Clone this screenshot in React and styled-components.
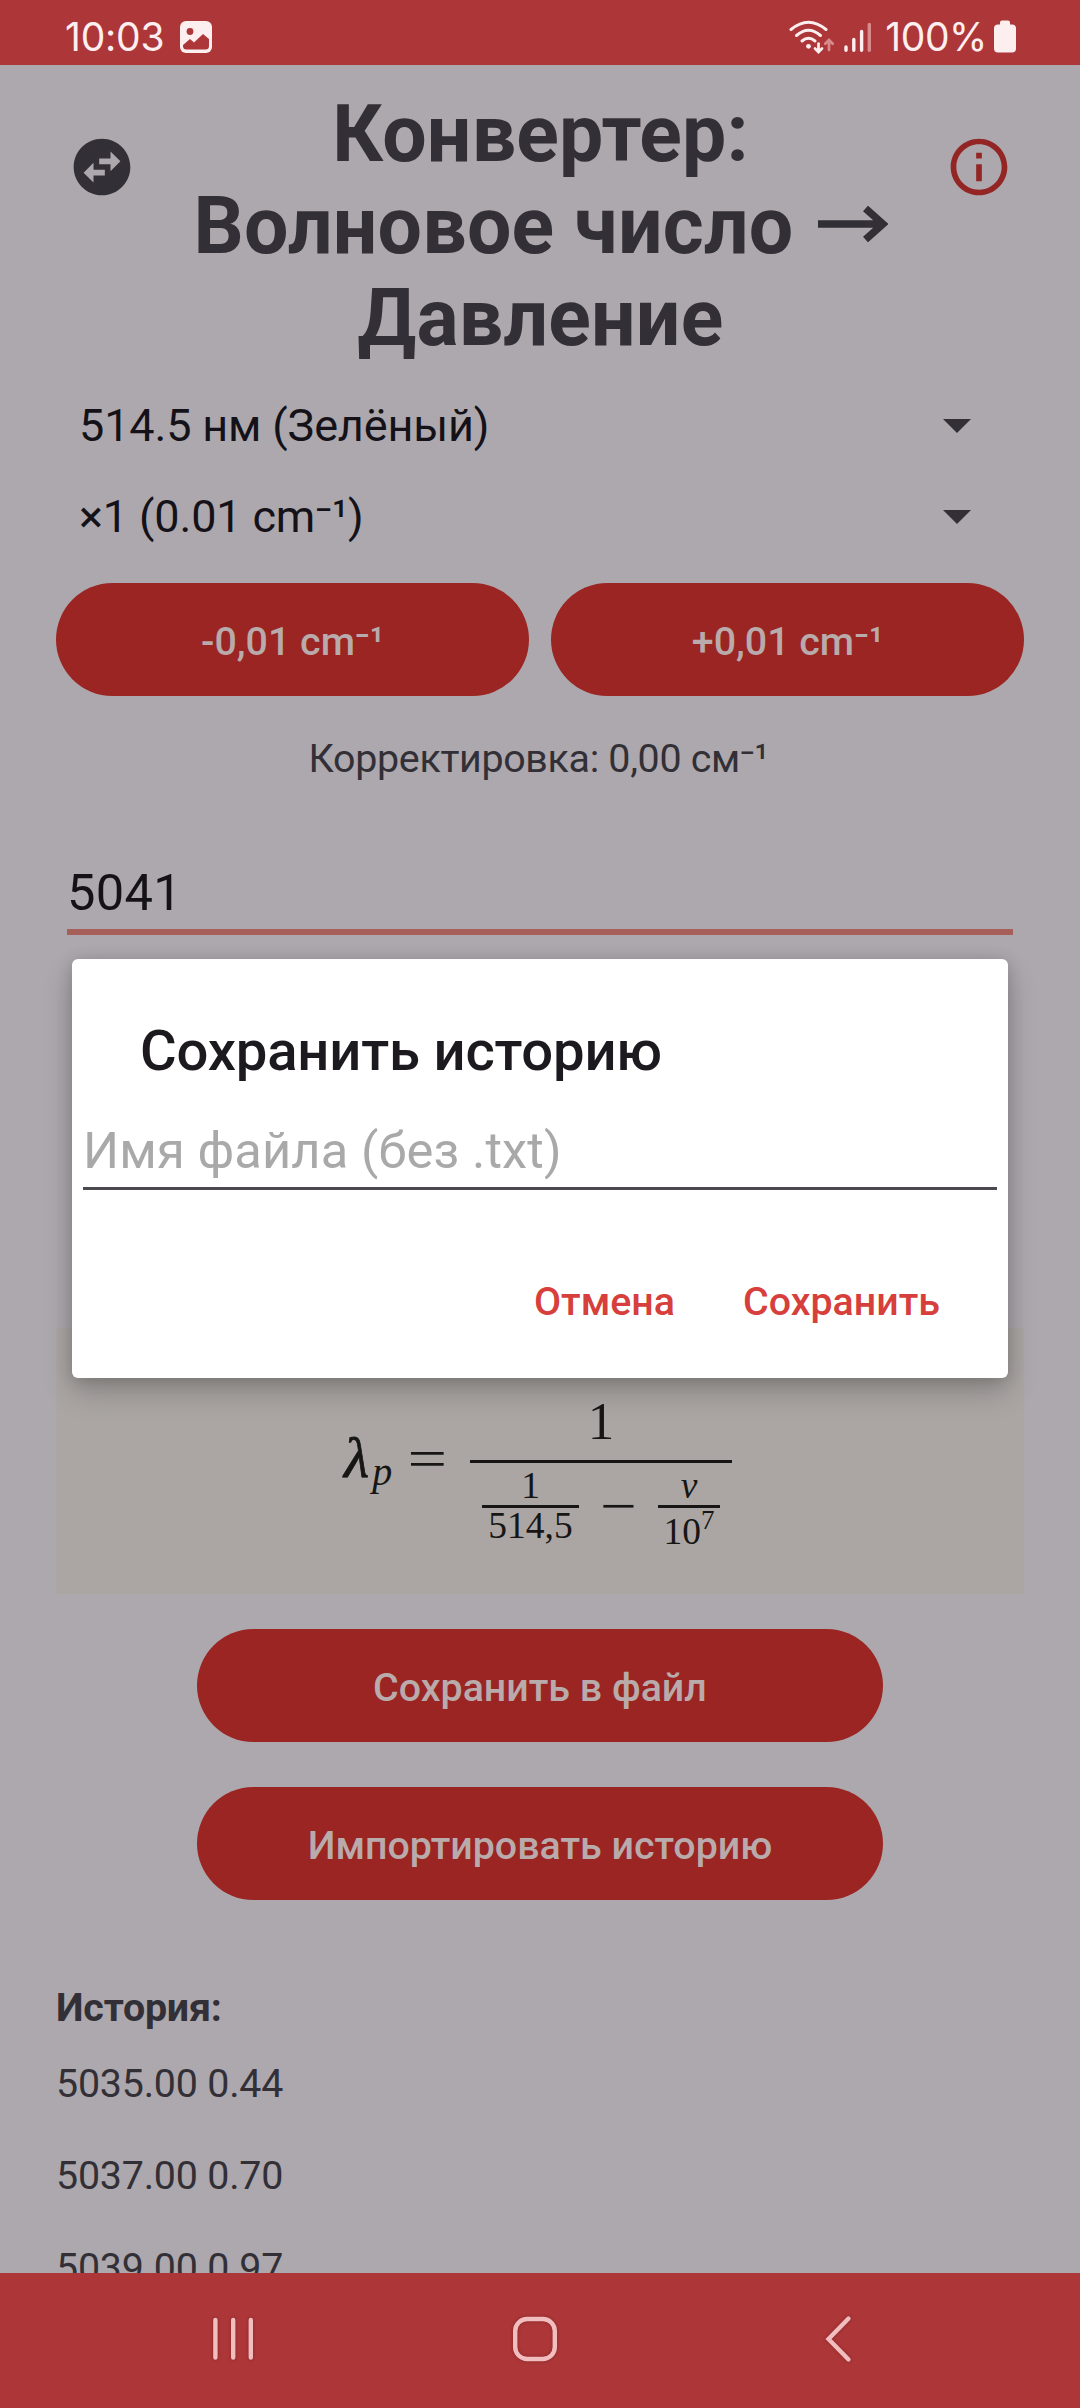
import React from "react";
import styled, { createGlobalStyle } from "styled-components";

const GlobalStyle = createGlobalStyle`
  * { box-sizing: border-box; }
  body { margin: 0; background: #aca8ad; }
`;

const Screen = styled.div`
  position: relative;
  display: flex;
  flex-direction: column;
  width: 1080px;
  height: 2408px;
  overflow: hidden;
  background: #aca8ad;
  color: #322f36;
  font-family: Roboto, "Noto Sans", sans-serif;
`;

const StatusBar = styled.header`
  flex: none;
  display: flex;
  justify-content: space-between;
  height: 65px;
  padding: 0 64px 0 65px;
  background: #ac3638;
  color: #fdeeef;
  font-family: Inter, Roboto, sans-serif;
`;

const StatusGroup = styled.div`
  display: flex;
  align-items: center;
  height: 73px;
`;

const StatusText = styled.span`
  font-size: 39px;
  line-height: 46px;
  letter-spacing: ${(p) => p.$spacing || "0"};
  margin-left: ${(p) => p.$left || 0}px;
`;

const StatusIcon = styled.svg`
  flex: none;
  display: block;
  margin-left: ${(p) => p.$left || 0}px;
`;

const Content = styled.main`
  flex: 1;
  min-height: 0;
  overflow: hidden;
  display: flex;
  flex-direction: column;
  padding: 23px 56px 0;
`;

const Header = styled.div`
  flex: none;
  display: flex;
  justify-content: space-between;
  padding: 0 11px 0 12px;
`;

const IconButton = styled.button`
  flex: none;
  width: 68px;
  height: 68px;
  margin: 45px 0 0;
  padding: 0;
  border: 0;
  background: none;
  color: ${(p) => p.$color};
  svg { display: block; width: 68px; height: 68px; }
`;

const Title = styled.h1`
  flex: 1;
  margin: 0;
  font-size: 78.75px;
  line-height: 92px;
  font-weight: 700;
  letter-spacing: 0.2px;
  text-align: center;
`;

const Arrow = styled.svg`
  display: inline-block;
  width: 70px;
  height: 36px;
  margin-left: 24px;
  vertical-align: 11px;
`;

const Spinners = styled.div`
  flex: none;
  margin-top: 16px;
`;

const Spinner = styled.div`
  display: flex;
  align-items: center;
  justify-content: space-between;
  height: 91px;
  padding: 0 53px 0 23px;
  font-size: 45px;
  line-height: 53px;
  letter-spacing: -0.15px;
  color: #141218;
`;

const Caret = styled.span`
  border: 14px solid transparent;
  border-top-color: #322f36;
  border-bottom: 0;
`;

const ButtonRow = styled.div`
  flex: none;
  display: flex;
  gap: 22px;
  margin-top: 21px;
  & > * { flex: 1 1 0; }
`;

const ButtonColumn = styled.div`
  flex: none;
  display: flex;
  flex-direction: column;
  gap: 45px;
  margin: 35px 141px 0;
`;

const PillButton = styled.button`
  height: 113px;
  padding: 5px 0 0;
  border: 0;
  border-radius: 57px;
  background: #9a2522;
  color: #b9aaab;
  font: 500 39.375px/46px Roboto, "Noto Sans", sans-serif;
`;

const Correction = styled.p`
  flex: none;
  margin: 40px 0 0;
  padding-right: 3px;
  text-align: center;
  font-size: 39.375px;
  line-height: 46px;
  letter-spacing: -0.3px;
`;

const NumberField = styled.div`
  flex: none;
  height: 72px;
  margin: 81px 11px 0;
  border-bottom: 6px solid #a65f59;
  font-size: 50.625px;
  line-height: 60px;
  letter-spacing: 0.3px;
  color: #141218;
`;

const FormulaCard = styled.section`
  flex: none;
  display: flex;
  align-items: flex-start;
  height: 266px;
  margin-top: 393px;
  padding: 68px 0 0 288px;
  background: #aba6a4;
  color: #171615;
  font-family: "Liberation Serif", serif;
`;

const Lhs = styled.div`
  display: flex;
  align-items: baseline;
  width: 126px;
  margin-top: 36px;
  font-size: 54px;
  line-height: 52px;
`;

const MathItalic = styled.i`
  font-size: ${(p) => p.$size}px;
  margin-left: ${(p) => p.$left || 0}px;
  position: relative;
  top: ${(p) => p.$drop || 0}px;
  -webkit-text-stroke: ${(p) => p.$stroke || 0}px currentColor;
`;

const Operator = styled.span`
  display: inline-block;
  font-size: 54px;
  margin-left: ${(p) => p.$left || 0}px;
  transform: scaleX(${(p) => p.$stretch});
`;

const Fraction = styled.div`
  display: flex;
  flex-direction: column;
  align-items: center;
  width: ${(p) => p.$width}px;
`;

const Term = styled.div`
  font-size: ${(p) => p.$size}px;
  line-height: ${(p) => p.$line}px;
  height: ${(p) => p.$line}px;
  margin-top: ${(p) => p.$top || 0}px;
  white-space: nowrap;
`;

const Bar = styled.div`
  align-self: stretch;
  height: 3px;
  margin-top: ${(p) => p.$top}px;
  background: #171615;
`;

const Denominator = styled.div`
  display: flex;
  justify-content: space-between;
  align-self: stretch;
  padding: 8px 12px 0;
`;

const Minus = styled(Operator)`
  line-height: 50px;
  height: 50px;
  margin-top: 10px;
`;

const Power = styled.sup`
  font-size: 27px;
  line-height: 0;
  vertical-align: 15px;
`;

const History = styled.section`
  flex: none;
  margin-top: 85px;
  font-size: 39.375px;
  letter-spacing: -0.2px;
`;

const HistoryTitle = styled.h2`
  margin: 0 0 7px;
  font-size: inherit;
  line-height: 46px;
  font-weight: 700;
`;

const HistoryRow = styled.div`
  height: 92px;
  line-height: 92px;
`;

const NavBar = styled.nav`
  flex: none;
  display: flex;
  align-items: center;
  justify-content: space-between;
  height: 135px;
  padding: 0 227px 3px 209px;
  background: #ac3638;
`;

const NavIcon = styled.svg`
  display: block;
  width: ${(p) => p.$width}px;
  height: 52px;
  fill: none;
  stroke: #f2bdbe;
  stroke-width: 4.4;
  stroke-linecap: round;
  filter: drop-shadow(0 0 1.5px rgba(90, 20, 22, 0.5));
`;

const Dialog = styled.div`
  position: absolute;
  left: 72px;
  top: 959px;
  width: 936px;
  height: 419px;
  padding: 59px 11px 0;
  border-radius: 6px;
  background: #fff;
  box-shadow: 0 14px 30px rgba(0, 0, 0, 0.2), 0 2px 16px rgba(0, 0, 0, 0.16);
`;

const DialogTitle = styled.h2`
  margin: 0 0 0 57px;
  font-size: 56.25px;
  line-height: 66px;
  font-weight: 500;
  letter-spacing: -0.2px;
  color: #1c1a1f;
`;

const FileField = styled.div`
  height: 69px;
  margin-top: 37px;
  border-bottom: 3px solid #4c4a50;
  font-size: 50.625px;
  line-height: 60px;
  letter-spacing: 0.12px;
  color: #a9a9a9;
`;

const DialogActions = styled.div`
  display: flex;
  justify-content: flex-end;
  gap: 68px;
  margin-top: 89px;
  padding-right: 57px;
`;

const TextButton = styled.button`
  padding: 0;
  border: 0;
  background: none;
  color: #d63f3b;
  font: 500 39.375px/46px Roboto, "Noto Sans", sans-serif;
`;

const history = ["5035.00 0.44", "5037.00 0.70", "5039.00 0.97"];

export default function App() {
  return (
    <>
      <GlobalStyle />
      <Screen>
        <StatusBar>
          <StatusGroup>
            <StatusText $spacing="-0.2px">10:03</StatusText>
            <StatusIcon $left={16} width="32" height="32" viewBox="0 0 32 32">
              <rect width="32" height="32" rx="6" fill="#fdeeef" />
              <circle cx="10" cy="10.5" r="3.4" fill="#ac3638" />
              <path d="M3 24 L10 18 L14 21.5 L23 13 L29 18 V25 Q29 28.5 25.500 28.500 H6.500 Q3 28.500 3 25Z" fill="#ac3638" />
            </StatusIcon>
          </StatusGroup>
          <StatusGroup>
            <StatusIcon width="46" height="34" viewBox="0 0 46 34" fill="none" stroke="#fdeeef" strokeWidth="3" strokeLinecap="round">
              <path d="M2 9.500 Q19.500 -5 37 9.500" />
              <path d="M7.500 15.500 Q19.500 5 31.500 15.500" />
              <path d="M13 21 Q19.500 15.500 26 21" />
              <circle cx="19.500" cy="26.300" r="2.400" fill="#fdeeef" stroke="none" />
              <path d="M29.500 23.500V31.500M26 28.500L29.500 32L33 28.500" strokeWidth="2.700" />
              <path d="M40 30V20.500M36.300 23.700L40 20L43.700 23.700" stroke="#d98a8c" strokeWidth="2.700" />
            </StatusIcon>
            <StatusIcon $left={9} width="28" height="32" viewBox="0 0 28 32" stroke="#fdeeef" strokeWidth="3.400" strokeLinecap="round">
              <path d="M2 26V29.300M9.800 18.500V29.300M17.600 10.500V29.300" />
              <path d="M25.300 3.500V29.300" stroke="#d98a8c" />
            </StatusIcon>
            <StatusText $left={13} $spacing="-0.4px">100%</StatusText>
            <StatusIcon $left={7} width="22" height="33" viewBox="0 0 22 33" fill="#fdeeef">
              <path d="M6 4.500V2.500Q6 .5 8 .5H14Q16 .5 16 2.500V4.500H18Q22 4.500 22 8.500V28.500Q22 32.500 18 32.500H4Q0 32.500 0 28.500V8.500Q0 4.500 4 4.500Z" />
            </StatusIcon>
          </StatusGroup>
        </StatusBar>

        <Content>
          <Header>
            <IconButton $color="#322f36" aria-label="swap">
              <svg viewBox="0 0 24 24" fill="currentColor">
                <path d="M22 12c0-5.520-4.480-10-10-10S2 6.480 2 12s4.480 10 10 10 10-4.480 10-10zm-7-5.500l3.500 3.500-3.500 3.500V11h-4V9h4V6.500zm-6 11L5.500 14 9 10.500V13h4v2H9v2.500z" />
              </svg>
            </IconButton>
            <Title>
              Конвертер:
              <br />
              Волновое число
              <Arrow viewBox="0 0 70 36" fill="none" stroke="currentColor" strokeWidth="7.500" role="img" aria-label="→">
                <path d="M0 18H65M47.500 2.500L65 18L47.500 33.500" />
              </Arrow>
              <br />
              Давление
            </Title>
            <IconButton $color="#932624" aria-label="info">
              <svg viewBox="0 0 24 24" fill="currentColor">
                <path d="M11 7h2v2h-2zm0 4h2v6h-2zm1-9C6.480 2 2 6.480 2 12s4.480 10 10 10 10-4.480 10-10S17.520 2 12 2zm0 18c-4.410 0-8-3.590-8-8s3.590-8 8-8 8 3.590 8 8-3.590 8-8 8z" />
              </svg>
            </IconButton>
          </Header>

          <Spinners>
            <Spinner>514.5 нм (Зелёный)<Caret /></Spinner>
            <Spinner>×1 (0.01 cm⁻¹)<Caret /></Spinner>
          </Spinners>

          <ButtonRow>
            <PillButton>-0,01 cm⁻¹</PillButton>
            <PillButton>+0,01 cm⁻¹</PillButton>
          </ButtonRow>

          <Correction>Корректировка: 0,00 см⁻¹</Correction>
          <NumberField>5041</NumberField>

          <FormulaCard>
            <Lhs>
              <MathItalic $size={58} $stroke={0.8}>λ</MathItalic>
              <MathItalic $size={40} $drop={8} $left={3}>p</MathItalic>
              <Operator $left={20} $stretch={1.3}>=</Operator>
            </Lhs>
            <Fraction $width={262}>
              <Term $size={53} $line={50}>1</Term>
              <Bar $top={14} />
              <Denominator>
                <Fraction $width={97}>
                  <Term $size={37.5} $line={30}>1</Term>
                  <Bar $top={4} />
                  <Term $size={37.5} $line={30} $top={3}>514,5</Term>
                </Fraction>
                <Minus $stretch={1.2}>−</Minus>
                <Fraction $width={62}>
                  <Term $size={37.5} $line={30}><i>ν</i></Term>
                  <Bar $top={4} />
                  <Term $size={37.5} $line={30} $top={9}>10<Power>7</Power></Term>
                </Fraction>
              </Denominator>
            </Fraction>
          </FormulaCard>

          <ButtonColumn>
            <PillButton>Сохранить в файл</PillButton>
            <PillButton>Импортировать историю</PillButton>
          </ButtonColumn>

          <History>
            <HistoryTitle>История:</HistoryTitle>
            {history.map((row) => (
              <HistoryRow key={row}>{row}</HistoryRow>
            ))}
          </History>
        </Content>

        <NavBar>
          <NavIcon $width={48} viewBox="0 0 48 52">
            <path d="M6.400 7V44.500M24.200 7V44.500M41.800 7V44.500" />
          </NavIcon>
          <NavIcon $width={52} viewBox="0 0 52 52">
            <rect x="6.200" y="6" width="39.600" height="40" rx="12" />
          </NavIcon>
          <NavIcon $width={40} viewBox="-8 0 40 52">
            <path d="M27.500 5.500L7.500 26L27.500 46.500" />
          </NavIcon>
        </NavBar>

        <Dialog role="dialog">
          <DialogTitle>Сохранить историю</DialogTitle>
          <FileField>Имя файла (без .txt)</FileField>
          <DialogActions>
            <TextButton>Отмена</TextButton>
            <TextButton>Сохранить</TextButton>
          </DialogActions>
        </Dialog>
      </Screen>
    </>
  );
}
